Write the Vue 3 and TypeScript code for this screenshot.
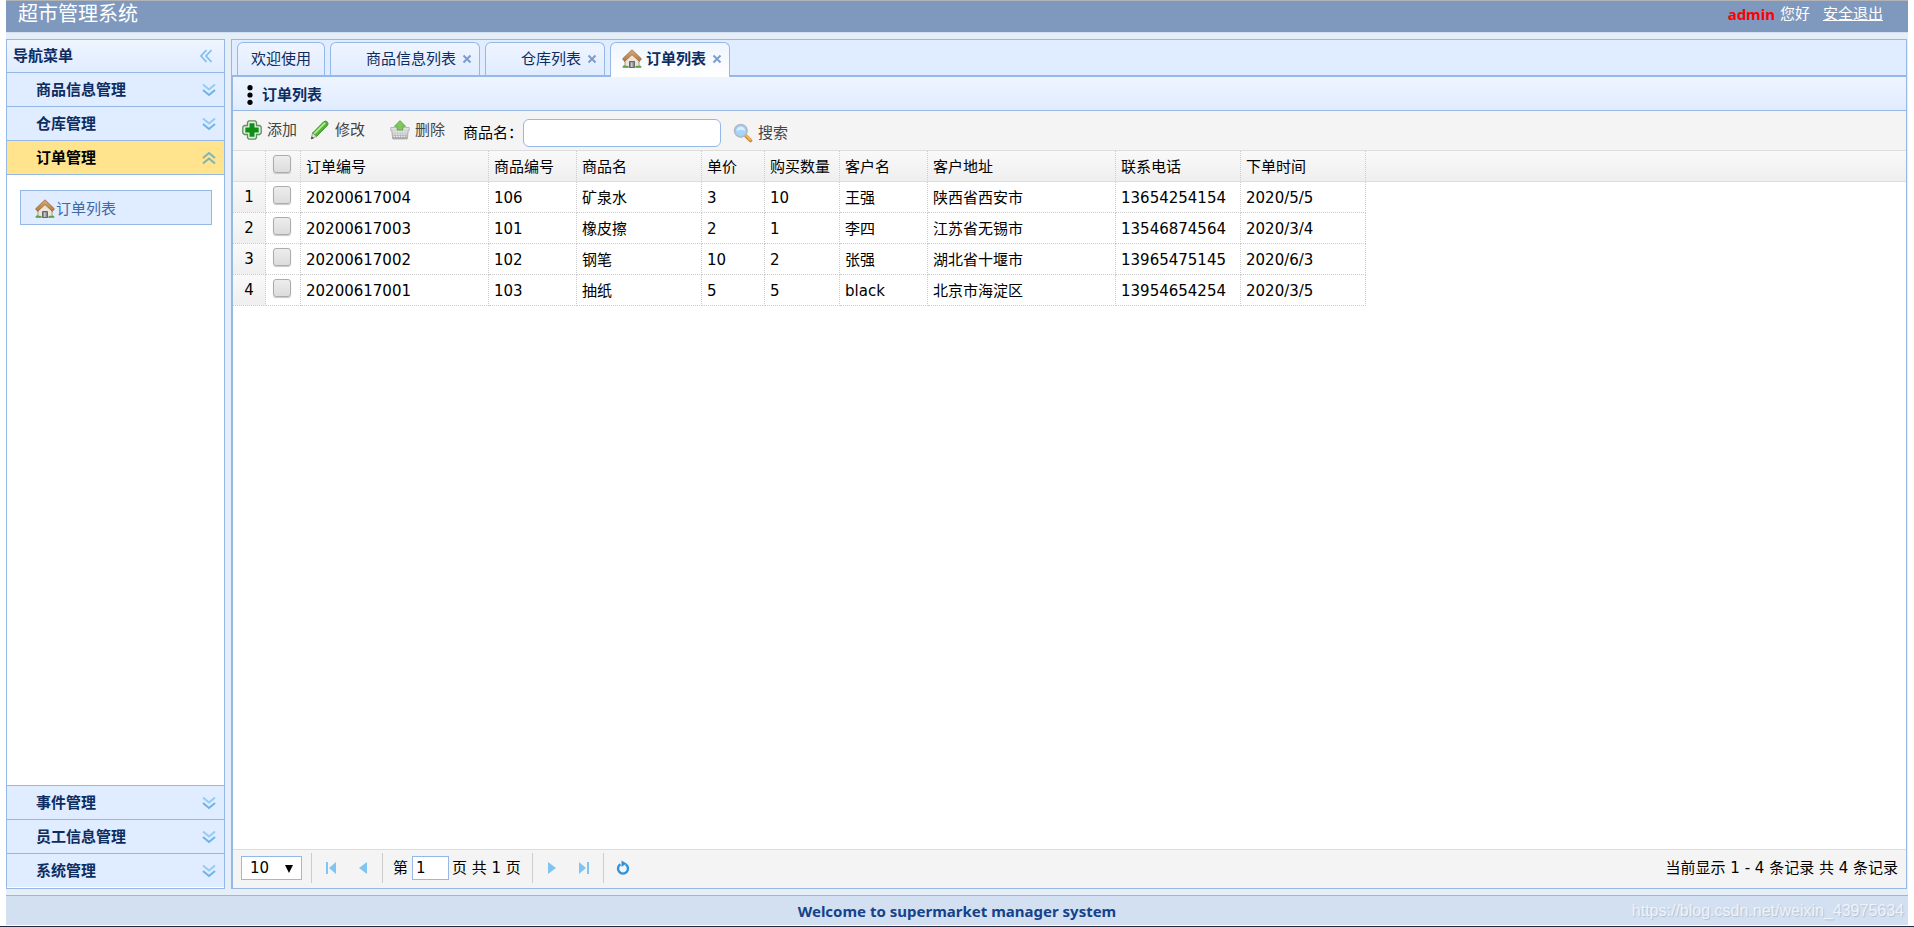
<script setup lang="ts">
import { ref } from 'vue'

interface Order {
  id: string
  goodsId: string
  goods: string
  price: number
  count: number
  customer: string
  address: string
  phone: string
  date: string
}

const topMenus: string[] = ['商品信息管理', '仓库管理']
const bottomMenus: string[] = ['事件管理', '员工信息管理', '系统管理']
const columns: string[] = ['订单编号', '商品编号', '商品名', '单价', '购买数量', '客户名', '客户地址', '联系电话', '下单时间']
const orders: Order[] = [
  { id: '20200617004', goodsId: '106', goods: '矿泉水', price: 3, count: 10, customer: '王强', address: '陕西省西安市', phone: '13654254154', date: '2020/5/5' },
  { id: '20200617003', goodsId: '101', goods: '橡皮擦', price: 2, count: 1, customer: '李四', address: '江苏省无锡市', phone: '13546874564', date: '2020/3/4' },
  { id: '20200617002', goodsId: '102', goods: '钢笔', price: 10, count: 2, customer: '张强', address: '湖北省十堰市', phone: '13965475145', date: '2020/6/3' },
  { id: '20200617001', goodsId: '103', goods: '抽纸', price: 5, count: 5, customer: 'black', address: '北京市海淀区', phone: '13954654254', date: '2020/3/5' },
]
const keyword = ref('')
const page = ref('1')
const pageSize = ref('10')
</script>

<template>
  <svg class="defs" aria-hidden="true">
    <defs>
      <linearGradient id="gRoof" x1="0" y1="0" x2="0" y2="1"><stop offset="0" stop-color="#dcae74" /><stop offset="1" stop-color="#b07840" /></linearGradient>
      <linearGradient id="gPen" x1="0" y1="0" x2="1" y2="1"><stop offset="0" stop-color="#8be060" /><stop offset="1" stop-color="#23921a" /></linearGradient>
      <linearGradient id="gBasket" x1="0" y1="0" x2="0" y2="1"><stop offset="0" stop-color="#e6e6e6" /><stop offset="1" stop-color="#a4a4a4" /></linearGradient>
      <symbol id="house" viewBox="0 0 20 20">
        <path d="M3 10 10 4l7 6v8H3z" fill="#ece5d8" stroke="#a99a86" />
        <path d="M7.500 18.500v-6h5v6z" fill="#8b8b90" stroke="#66666c" />
        <path d="M9 18v-4.500h1.500V18z" fill="#c8c8cc" />
        <path d="M10 .8.6 9.800l2 2.600L10 5.600l7.400 6.800 2-2.600z" fill="url(#gRoof)" stroke="#96653a" stroke-width=".8" stroke-linejoin="round" />
        <path d="M.5 18.800c0-2.700 2.500-3 3.500-1.700 1.500-.9 2.500.2 2.500 1.700zM13.500 18.800c0-2.300 1.600-2.500 2.700-1.700 1.500-1.200 3.300-.6 3.300 1.700z" fill="#5aa343" />
      </symbol>
      <symbol id="down" viewBox="0 0 14 14">
        <path d="M1 1.500 7 6.500l6-5" fill="none" stroke="#93ccf4" stroke-width="2" />
        <path d="M1 7 7 12l6-5" fill="none" stroke="#6fb2ea" stroke-width="2" />
      </symbol>
      <symbol id="close" viewBox="0 0 10 10">
        <path d="m1.500 1.500 7 7M8.500 1.500l-7 7" fill="none" stroke="#7d9ccf" stroke-width="2" />
      </symbol>
    </defs>
  </svg>

  <div class="page">
    <header class="top">
      <h1>超市管理系统</h1>
      <div class="user"><b>admin</b><span>您好</span><a href="#">安全退出</a></div>
    </header>

    <div class="body">
      <nav class="side" aria-label="导航菜单">
        <div class="side-title">
          <span>导航菜单</span>
          <button type="button" class="plain" aria-label="折叠">
            <svg width="12" height="14" viewBox="0 0 12 14"><path d="M6.500 1 1 7l5.500 6M11.500 1 6 7l5.500 6" fill="none" stroke="#7cc0f0" stroke-width="1.800" /></svg>
          </button>
        </div>
        <button v-for="m in topMenus" :key="m" type="button" class="acc"><span>{{ m }}</span><svg class="chev"><use href="#down" /></svg></button>
        <button type="button" class="acc open"><span>订单管理</span>
          <svg class="chev" viewBox="0 0 14 14"><path d="M1 7 7 2l6 5M1 12.500 7 7.500l6 5" fill="none" stroke="#7fb4b4" stroke-width="2" /></svg>
        </button>
        <div class="acc-body">
          <a href="#" class="leaf"><svg class="i20"><use href="#house" /></svg>订单列表</a>
        </div>
        <button v-for="m in bottomMenus" :key="m" type="button" class="acc low"><span>{{ m }}</span><svg class="chev"><use href="#down" /></svg></button>
      </nav>

      <main class="center">
        <div class="tabs">
          <div class="tab"><button type="button" class="plain">欢迎使用</button></div>
          <div class="tab blank"><button type="button" class="plain">商品信息列表</button><button type="button" class="plain" aria-label="关闭"><svg class="i10"><use href="#close" /></svg></button></div>
          <div class="tab blank"><button type="button" class="plain">仓库列表</button><button type="button" class="plain" aria-label="关闭"><svg class="i10"><use href="#close" /></svg></button></div>
          <div class="tab current"><button type="button" class="plain"><svg class="i20"><use href="#house" /></svg>订单列表</button><button type="button" class="plain" aria-label="关闭"><svg class="i10"><use href="#close" /></svg></button></div>
        </div>

        <section class="panel">
          <h2>
            <svg width="6" height="20" viewBox="0 0 6 20"><circle cx="3" cy="2.700" r="2.600" /><circle cx="3" cy="10" r="2.600" /><circle cx="3" cy="17.300" r="2.600" /></svg>
            订单列表
          </h2>
          <div class="toolbar">
            <button type="button" class="plain tool add">
              <svg class="i20" viewBox="0 0 20 20"><path d="M7 .8h6l1.500 1.500v3.200h3.200L19.200 7v6l-1.500 1.500h-3.200v3.200L13 19.200H7l-1.500-1.500v-3.200H2.300L.8 13V7l1.500-1.500h3.200V2.300z" fill="#e3f1df" stroke="#5d8f60" stroke-width="1.300" stroke-linejoin="round" /><path d="M7.500 3.300h5v4.200h4.200v5h-4.200v4.200h-5v-4.200H3.300v-5h4.200z" fill="#0f8f18" /></svg>添加
            </button>
            <button type="button" class="plain tool edit">
              <svg class="i20" viewBox="0 0 20 20"><path d="M2.600 13 13.400 2q2-1.800 3.900-.1 1.600 1.700 0 3.600L6.600 16.500z" fill="url(#gPen)" stroke="#3b8c2e" stroke-width=".9" /><path d="m1.200 18.800 1.400-5.800 4 3.500z" fill="#dfe5cf" stroke="#5e7f4c" stroke-width=".6" /><path d="M4.300 13.700 15 2.900" stroke="#b9f096" stroke-width="1.500" /><path d="m1 19.200.8-2.800 2 1.800z" fill="#333" /></svg>修改
            </button>
            <button type="button" class="plain tool del">
              <svg class="i20" viewBox="0 0 20 20"><path d="M.8 7.500h18.400v3h-.9L17.300 19H2.700L1.700 10.500H.8z" fill="url(#gBasket)" stroke="#ababab" stroke-width=".8" /><path d="M3 12h14M3.300 14.200h13.400M3.600 16.400h12.800" stroke="#f7f7f7" stroke-width="1" stroke-dasharray="1.500 1" /><path d="m10 .6 5.500 5.700h-2.700V10H7.200V6.300H4.500z" fill="#7cc95c" stroke="#5da74a" stroke-width=".9" stroke-linejoin="round" /></svg>删除
            </button>
            <label for="goods-name">商品名：</label>
            <input id="goods-name" v-model="keyword" type="text" class="search-box">
            <button type="button" class="plain tool find">
              <svg class="i20" viewBox="0 0 20 20"><path d="m13 13 4.500 4.500" stroke="#c98a45" stroke-width="3.600" stroke-linecap="round" /><path d="m13.500 12.800 4 4" stroke="#f9b84e" stroke-width="1.800" stroke-linecap="round" /><circle cx="7.800" cy="7.800" r="6.200" fill="#a5d5fb" stroke="#b3bac8" stroke-width="1.800" /><path d="M3.500 8a4.300 4.300 0 0 1 8.600 0q-4.300-2-8.600 0z" fill="#d9efff" /></svg>搜索
            </button>
          </div>

          <div class="grid">
            <div class="head-band"></div>
            <table>
              <colgroup><col class="c33"><col class="c35"><col class="c188"><col class="c88"><col class="c125"><col class="c63"><col class="c75"><col class="c88"><col class="c188"><col class="c125"><col class="c125"></colgroup>
              <thead>
                <tr><th></th><th class="ck"><input type="checkbox" aria-label="全选"></th><th v-for="c in columns" :key="c" scope="col">{{ c }}</th></tr>
              </thead>
              <tbody>
                <tr v-for="(o, i) in orders" :key="o.id">
                  <td class="no">{{ i + 1 }}</td>
                  <td class="ck"><input type="checkbox" :aria-label="o.id"></td>
                  <td>{{ o.id }}</td><td>{{ o.goodsId }}</td><td>{{ o.goods }}</td><td>{{ o.price }}</td><td>{{ o.count }}</td><td>{{ o.customer }}</td><td>{{ o.address }}</td><td>{{ o.phone }}</td><td>{{ o.date }}</td>
                </tr>
              </tbody>
            </table>
          </div>

          <div class="pager">
            <span class="size">
              <select v-model="pageSize" aria-label="每页条数"><option>10</option><option>20</option></select>
              <svg class="arrow" width="8" height="8" viewBox="0 0 8 8"><path d="M0 0h8L4 8z" /></svg>
            </span>
            <i class="sep"></i>
            <button type="button" class="plain pg" aria-label="首页"><svg width="14" height="14" viewBox="0 0 14 14"><path d="M2 1h2v12H2zM12 1v12L5 7z" /></svg></button>
            <button type="button" class="plain pg" aria-label="上一页"><svg width="14" height="14" viewBox="0 0 14 14"><path d="M11 1v12L3 7z" /></svg></button>
            <i class="sep"></i>
            <label for="page-no">第</label>
            <input id="page-no" v-model="page" type="text" class="page-no">
            <span class="total">页 共 1 页</span>
            <i class="sep"></i>
            <button type="button" class="plain pg" aria-label="下一页"><svg width="14" height="14" viewBox="0 0 14 14"><path d="M3 1v12l8-6z" /></svg></button>
            <button type="button" class="plain pg" aria-label="末页"><svg width="14" height="14" viewBox="0 0 14 14"><path d="M2 1v12l7-6zM10 1h2v12h-2z" /></svg></button>
            <i class="sep"></i>
            <button type="button" class="plain pg" aria-label="刷新"><svg width="14" height="16" viewBox="0 0 14 16"><path d="M9.500 4.300A5 5 0 1 1 4.500 4.300" fill="none" stroke="#2f92dc" stroke-width="2.400" /><path d="M5.500.5v6.500L10.500 3.500z" fill="#2f92dc" /></svg></button>
            <span class="info">当前显示 1 - 4 条记录 共 4 条记录</span>
          </div>
        </section>
      </main>
    </div>

    <footer><strong>Welcome to supermarket manager system</strong><span class="mark">https://blog.csdn.net/weixin_43975634</span></footer>
  </div>
</template>

<style>
body { background: #fff; }
</style>

<style scoped>
* { box-sizing: border-box; }
.defs { position: absolute; width: 0; height: 0; }
.page {
  height: 100vh;
  padding: 0 6px;
  border-bottom: 1px solid #26263c;
  display: flex;
  flex-direction: column;
  font: 15px/20px "DejaVu Sans", "Noto Sans CJK SC", sans-serif;
  color: #000;
}
button, input, select { font: inherit; color: inherit; margin: 0; }
.plain { border: 0; padding: 0; background: none; display: flex; align-items: center; cursor: pointer; }
.i20 { width: 20px; height: 20px; flex: none; }
.i10 { width: 10px; height: 10px; }
.top {
  height: 33px;
  flex: none;
  padding: 0 25px 5px 12px;
  background: #7f99be;
  border-top: 1px solid #b3b3b6;
  border-bottom: 1px solid #d2e0f2;
  display: flex;
  align-items: center;
  justify-content: space-between;
  color: #fff;
}
.top h1 { margin: 0; font-size: 20px; font-weight: 400; line-height: 24px; }
.user { display: flex; gap: 5px; }
.user b { color: #f00; font-family: "Noto Sans", sans-serif; }
.user a { color: #fff; margin-left: 8px; }
.body { flex: 1; min-height: 0; background: #e6eef8; padding: 6px 1px 6px 0; display: flex; gap: 6px; }
.side { width: 219px; flex: none; border: 1px solid #95b8e7; background: #fff; padding-bottom: 1px; display: flex; flex-direction: column; font-weight: 700; color: #0e2d5f; }
.side-title, .acc { height: 34px; flex: none; display: flex; align-items: center; justify-content: space-between; border: 0; border-bottom: 1px solid #95b8e7; }
.side-title { height: 33px; padding: 0 12px 0 6px; background: linear-gradient(#eff5ff, #e0ecff); }
.acc { padding: 0 8px 0 29px; background: #e0ecff; width: 100%; }
.acc.open { background: #ffe48d; color: #000; }
.acc.low { border-bottom: 0; border-top: 1px solid #95b8e7; }
.chev { width: 14px; height: 14px; }
.acc-body { flex: 1; padding: 15px 12px 15px 13px; }
.leaf { display: flex; align-items: center; gap: 1px; height: 35px; padding: 2px 14px 0; border: 1px solid #95b8e7; background: #e0ecff; color: #416aa3; font-weight: 400; text-decoration: none; }
.center { flex: 1; min-width: 0; border: 1px solid #95b8e7; display: flex; flex-direction: column; background: #e0ecff; }
.tabs { height: 37px; flex: none; padding: 2px 5px 0; display: flex; gap: 5px; border-bottom: 2px solid #95b8e7; }
.tab { height: 33px; display: flex; align-items: center; gap: 6px; padding: 0 13px; border: 1px solid #95b8e7; border-bottom: 0; border-radius: 6px 6px 0 0; background: linear-gradient(#eff5ff, #e0ecff); color: #0e2d5f; }
.tab.blank { padding: 0 7px 0 35px; }
.tab.current { height: 35px; padding: 0 7px 2px 11px; background: linear-gradient(#eff5ff, #fff); font-weight: 700; }
.tab .i20 { margin-right: 4px; }
.panel { flex: 1; min-height: 0; border-left: 1px solid #95b8e7; background: #fff; display: flex; flex-direction: column; }
.panel h2 { height: 34px; flex: none; margin: 0; padding: 2px 14px 0; display: flex; align-items: center; gap: 9px; font-size: 15px; color: #0e2d5f; border-bottom: 1px solid #95b8e7; background: linear-gradient(#eff5ff, #e0ecff); }
.panel h2 svg { fill: #000; }
.toolbar { height: 40px; flex: none; padding: 4px 9px 0; display: flex; align-items: center; background: #f4f4f4; border-bottom: 1px solid #ddd; }
.tool { gap: 5px; color: #444; }
.edit { margin-left: 13px; }
.del { margin-left: 25px; }
.add, .edit, .del { padding-bottom: 6px; }
.toolbar label { margin-left: 18px; }
.search-box { width: 198px; height: 28px; border: 1px solid #95b8e7; border-radius: 6px; background: #fff; padding: 0 6px; outline: 0; }
.find { margin-left: 12px; }
.grid { flex: 1; min-height: 0; position: relative; }
.head-band { position: absolute; left: 0; right: 0; top: 0; height: 31px; border-bottom: 1px solid #ddd; background: linear-gradient(#f9f9f9, #efefef); }
table { position: relative; table-layout: fixed; border-collapse: separate; border-spacing: 0; width: 1133px; }
.c33 { width: 33px; } .c35 { width: 35px; } .c63 { width: 63px; } .c75 { width: 75px; } .c88 { width: 88px; } .c125 { width: 125px; } .c188 { width: 188px; }
th, td { height: 31px; padding: 1px 5px 0; border-right: 1px dotted #ccc; border-bottom: 1px dotted #ccc; font-weight: 400; text-align: left; white-space: nowrap; }
th { border-bottom: 1px solid #ddd; }
.no { padding-top: 0; text-align: center; background: linear-gradient(#f9f9f9, #efefef); }
.ck { padding: 0 0 4px; }
.ck input { appearance: none; display: block; width: 18px; height: 18px; margin: 0 auto 0 7px; border: 1px solid #acacac; border-radius: 3px; background: linear-gradient(#ededed, #dcdcdc); box-shadow: 0 1px 1px #c8c8c8; }
.pager { height: 39px; flex: none; border-top: 1px solid #ddd; background: #f4f4f4; padding: 0 8px 2px; display: flex; align-items: center; }
.size { position: relative; display: flex; margin-right: 6px; }
.size select { appearance: none; width: 61px; height: 24px; border: 1px solid #95b8e7; border-radius: 0; padding: 0 8px; background: #fff; }
.arrow { position: absolute; right: 9px; top: 9px; pointer-events: none; }
.sep { width: 1px; height: 30px; background: #ccc; margin: 0 3px; }
.pg { width: 32px; height: 26px; justify-content: center; fill: #80c4f0; }
.pager label { margin-left: 7px; }
.page-no { width: 37px; height: 24px; margin: 0 3px 0 4px; border: 1px solid #95b8e7; padding: 0 3px; }
.total { margin-right: 8px; }
.info { margin-left: auto; }
footer { height: 31px; flex: none; border-top: 1px solid #95b8e7; border-bottom: 1px solid #fff; background: #d2e0f2; display: grid; grid-template-columns: 1fr auto 1fr; align-items: center; color: #15428b; }
footer strong { grid-column: 2; font-family: "Noto Sans", sans-serif; }
.mark { justify-self: end; padding-right: 4px; font: 16px/20px "Liberation Sans", sans-serif; color: #eef3fa; text-shadow: 1px 1px 1px #b4bfce; }
</style>
